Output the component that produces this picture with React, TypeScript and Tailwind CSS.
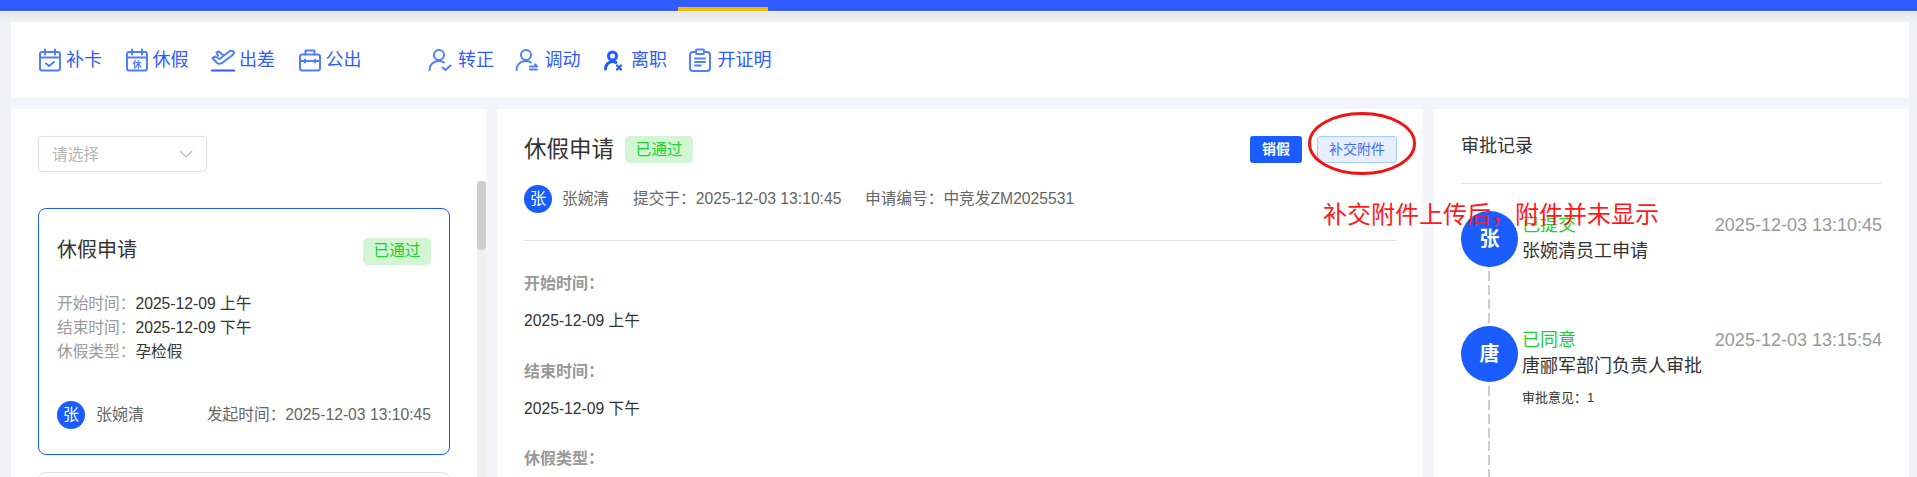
import type { ReactNode } from 'react';

const FONT = "font-['Liberation_Sans','Noto_Sans_CJK_SC',sans-serif]";

function Svg({ children }: { children: ReactNode }) {
  return (
    <svg
      viewBox="0 0 24 24"
      className="h-[24px] w-[24px] shrink-0"
      fill="none"
      stroke="#4f7fff"
      strokeWidth="2"
      strokeLinecap="round"
      strokeLinejoin="round"
    >
      {children}
    </svg>
  );
}

const icons: Record<string, ReactNode> = {
  card: (
    <Svg>
      <rect x="2" y="4" width="20" height="18.5" rx="2" />
      <path d="M2 9.5h20M7 1.5v5M17 1.5v5M8 15.5l3 2.5 5-4" />
    </Svg>
  ),
  leave: (
    <Svg>
      <rect x="2" y="4" width="20" height="18.5" rx="2" />
      <path d="M2 9.5h20M7 1.5v5M17 1.5v5" />
      <text x="12" y="20" textAnchor="middle" fontSize="9" fontWeight="700" fill="#4f7fff" stroke="none">
        休
      </text>
    </Svg>
  ),
  trip: (
    <Svg>
      <path d="M1.5 10l3-1.500 4 2.500 9-7c1.500-1 4-1.500 5-.5s0 3-1.500 4L11 15c-2 1-3.500 1-5 0z" />
      <path d="M7 7.500L5.500 4.500 8 3.500l4 3.500" />
      <path d="M1 22.500h22" strokeWidth="2.200" stroke="#2f5bff" />
    </Svg>
  ),
  out: (
    <Svg>
      <rect x="2" y="6.5" width="20" height="16" rx="2" />
      <path d="M7.5 6.5V2.5h9v4M2 13h20M7 11.5v3M17 11.5v3" />
    </Svg>
  ),
  regular: (
    <Svg>
      <circle cx="11" cy="7" r="5" />
      <path d="M1.5 22c0-5 3.5-9 9.500-9 2 0 3.500.4 5 1.500" />
      <path d="M14.500 19.500l3 2.500 5-4.500" />
    </Svg>
  ),
  transfer: (
    <Svg>
      <circle cx="11" cy="7" r="5" />
      <path d="M1.5 22c0-5 3.5-9 9.500-9 2 0 3.500.4 5 1.500" />
      <path d="M15 18.500h7l-2-2M22 21.500h-7" strokeWidth="2.200" />
    </Svg>
  ),
  quit: (
    <Svg>
      <circle cx="11.500" cy="8" r="4" stroke="#1f5cff" strokeWidth="3" />
      <path d="M4.500 21c0-4 3-7.500 7-7.500 1.500 0 2.500.3 3.500 1" stroke="#1f5cff" strokeWidth="3" />
      <path d="M16 17.500l4 4M20 17.500l-4 4" stroke="#1f5cff" strokeWidth="2.200" />
    </Svg>
  ),
  cert: (
    <Svg>
      <rect x="2" y="4" width="20" height="19" rx="3" />
      <rect x="8" y="1.500" width="8" height="4.500" rx="1" fill="#fff" />
      <path d="M7 10.500h10M7 14h10M7 17.500h6" />
    </Svg>
  ),
};

function NavItem({ icon, label, className = '' }: { icon: string; label: string; className?: string }) {
  return (
    <a className={`flex w-[86.500px] shrink-0 items-center whitespace-nowrap text-[18px] text-[#2f5bff] ${className}`}>
      {icons[icon]}
      <span>{label}</span>
    </a>
  );
}

function Avatar({ name }: { name: string }) {
  return (
    <div className="flex h-[28px] w-[28px] shrink-0 items-center justify-center rounded-full bg-[#1a5cff] text-[16px] text-white">
      {name}
    </div>
  );
}

function StatusTag() {
  return (
    <span className="flex h-[27px] w-[68px] items-center justify-center rounded-[5px] bg-[#d2f5d4] text-[15.700px] text-[#1fd02c]">
      已通过
    </span>
  );
}

function InfoLine({ label, value }: { label: string; value: string }) {
  return (
    <div className="h-[24px] text-[15.700px] leading-[24px]">
      <span className="text-[#999]">{label}：</span>
      <span className="text-[#333]">{value}</span>
    </div>
  );
}

function DetailField({ label, value }: { label: string; value?: string }) {
  return (
    <div className="h-[87.500px]">
      <div className="h-[24px] text-[16px] font-bold leading-[24px] text-[#999]">{label}：</div>
      {value && <div className="mt-[13px] h-[24px] text-[15.700px] leading-[24px] text-[#333]">{value}</div>}
    </div>
  );
}

function DashLine({ className = '' }: { className?: string }) {
  return (
    <div
      className={`w-[2px] bg-[repeating-linear-gradient(to_bottom,#cccccc_0,#cccccc_10px,transparent_10px,transparent_14px)] ${className}`}
    />
  );
}

function TimelineItem({
  initial,
  status,
  statusColor,
  time,
  title,
  comment,
}: {
  initial: string;
  status: string;
  statusColor: string;
  time: string;
  title: string;
  comment?: string;
}) {
  return (
    <div className="flex h-[115px] gap-[4px]">
      <div className="flex w-[57px] shrink-0 flex-col items-center">
        <div className="flex h-[56px] w-[57px] shrink-0 items-center justify-center rounded-full bg-[#1a5cff] text-[20px] font-bold text-white">
          {initial}
        </div>
        <DashLine className="mt-[4px] flex-1 -translate-x-[1px]" />
      </div>
      <div className="min-w-0 flex-1">
        <div className="flex h-[28px] items-center justify-between text-[18px]">
          <span className={statusColor}>{status}</span>
          <span className="text-[#999]">{time}</span>
        </div>
        <div className="h-[24px] text-[18px] leading-[24px] text-[#333]">{title}</div>
        {comment && <div className="mt-[8px] h-[24px] text-[13px] leading-[24px] text-[#333]">{comment}</div>}
      </div>
    </div>
  );
}

export default function App() {
  return (
    <div className={`relative flex h-[477px] w-[1917px] flex-col overflow-hidden bg-[#f1f2f5] ${FONT}`}>
      {/* top bar */}
      <div className="flex h-[11px] shrink-0 items-end bg-[#2f5bff] pl-[678px]">
        <div className="h-[4px] w-[90px] bg-[#fdb900]" />
      </div>
      <div className="h-[11px] shrink-0 border-t border-white bg-gradient-to-b from-[#e6e7ea] to-[#f1f2f5]" />

      <div className="ml-[11px] mr-[8px] flex min-h-0 flex-1 flex-col bg-[#f4f5fa]">
        {/* action nav */}
        <div className="flex h-[76px] shrink-0 items-center gap-0 bg-white pl-[27px]">
          <NavItem icon="card" label="补卡" className="gap-[4px]" />
          <NavItem icon="leave" label="休假" className="gap-[4px]" />
          <NavItem icon="trip" label="出差" className="gap-[4px]" />
          <NavItem icon="out" label="公出" className="gap-[4px]" />
          <NavItem icon="regular" label="转正" className="ml-[44px] gap-[6px]" />
          <NavItem icon="transfer" label="调动" className="gap-[6px]" />
          <NavItem icon="quit" label="离职" className="gap-[6px]" />
          <NavItem icon="cert" label="开证明" className="gap-[6px]" />
        </div>

        <div className="mt-[11px] flex min-h-0 flex-1 gap-[11px]">
          {/* list */}
          <div className="relative w-[475px] shrink-0 overflow-hidden bg-white pl-[27px] pt-[27px]">
            <div className="flex h-[36px] w-[169px] items-center justify-between rounded-[4px] border border-[#dcdfe6] px-[13px] text-[15.700px] text-[#b5b5b5]">
              <span className="translate-y-[1px]">请选择</span>
              <svg viewBox="0 0 14 8" className="h-[8px] w-[14px]" fill="none" stroke="#bbb" strokeWidth="1.200">
                <path d="M1 1l6 6 6-6" />
              </svg>
            </div>

            <div className="mt-[36px] flex h-[247px] w-[412px] flex-col rounded-[8px] border border-[#1a5cff] px-[18px] pt-[27px]">
              <div className="flex items-center justify-between">
                <span className="-translate-y-[1px] text-[20px] text-[#333]">休假申请</span>
                <StatusTag />
              </div>
              <div className="mt-[26px]">
                <InfoLine label="开始时间" value="2025-12-09 上午" />
                <InfoLine label="结束时间" value="2025-12-09 下午" />
                <InfoLine label="休假类型" value="孕检假" />
              </div>
              <div className="mt-[37px] flex items-center justify-between">
                <div className="flex items-center gap-[11px]">
                  <Avatar name="张" />
                  <span className="text-[16px] text-[#666]">张婉清</span>
                </div>
                <span className="text-[15.700px] text-[#666]">发起时间：2025-12-03 13:10:45</span>
              </div>
            </div>
            <div className="mt-[17px] h-[60px] w-[412px] rounded-[8px] border border-[#ddd]" />

            {/* scrollbar */}
            <div className="absolute bottom-0 right-0 top-[72px] w-[9px] bg-[#f0f0f0]">
              <div className="h-[69px] rounded-[4px] bg-[#cfcfcf]" />
            </div>
          </div>

          {/* detail */}
          <div className="w-[926px] shrink-0 overflow-hidden bg-white pl-[27px] pr-[26px] pt-[27px]">
            <div className="flex h-[27px] items-center justify-between">
              <div className="flex items-center gap-[11px]">
                <span className="text-[22.500px] text-[#333]">休假申请</span>
                <StatusTag />
              </div>
              <div className="flex items-center gap-[15px]">
                <button className="flex h-[27px] w-[52px] items-center justify-center rounded-[3px] bg-[#1a5cff] text-[14px] font-bold text-white">
                  销假
                </button>
                <button className="flex h-[27px] w-[80px] items-center justify-center rounded-[3px] border border-[#a6cdff] bg-[#e8eeff] text-[14px] text-[#3b6fff]">
                  补交附件
                </button>
              </div>
            </div>
            <div className="mt-[22px] flex h-[28px] items-center text-[15.700px] text-[#666]">
              <Avatar name="张" />
              <span className="ml-[10px] w-[71px]">张婉清</span>
              <span className="w-[232px]">提交于：2025-12-03 13:10:45</span>
              <span>申请编号：中竞发ZM2025531</span>
            </div>
            <div className="mt-[27px] border-t border-[#e0e0e6]" />
            <div className="pt-[31px]">
              <DetailField label="开始时间" value="2025-12-09 上午" />
              <DetailField label="结束时间" value="2025-12-09 下午" />
              <DetailField label="休假类型" />
            </div>
          </div>

          {/* approval record */}
          <div className="min-w-0 flex-1 overflow-hidden bg-white px-[27px]">
            <div className="flex h-[75px] items-center border-b border-[#e2e2e2] pt-[1px] text-[18px] text-[#333]">审批记录</div>
            <div className="pt-[27px]">
              <TimelineItem
                initial="张"
                status="已提交"
                statusColor="text-[#1fd02c]"
                time="2025-12-03 13:10:45"
                title="张婉清员工申请"
              />
              <TimelineItem
                initial="唐"
                status="已同意"
                statusColor="text-[#1fd02c]"
                time="2025-12-03 13:15:54"
                title="唐郦军部门负责人审批"
                comment="审批意见：1"
              />
              <DashLine className="ml-[27px] h-[40px]" />
            </div>
          </div>
        </div>
      </div>

      {/* red annotation on top of the screenshot */}
      <svg className="absolute left-[1307px] top-[111px] h-[65px] w-[110px]" viewBox="0 0 110 65" fill="none">
        <ellipse cx="55" cy="32.500" rx="52.500" ry="30" stroke="#f01414" strokeWidth="3" />
      </svg>
      <div className="absolute left-[1323px] top-[199px] whitespace-nowrap text-[24px] leading-[32px] text-[#ff1a1a]">
        补交附件上传后，附件并未显示
      </div>
    </div>
  );
}
